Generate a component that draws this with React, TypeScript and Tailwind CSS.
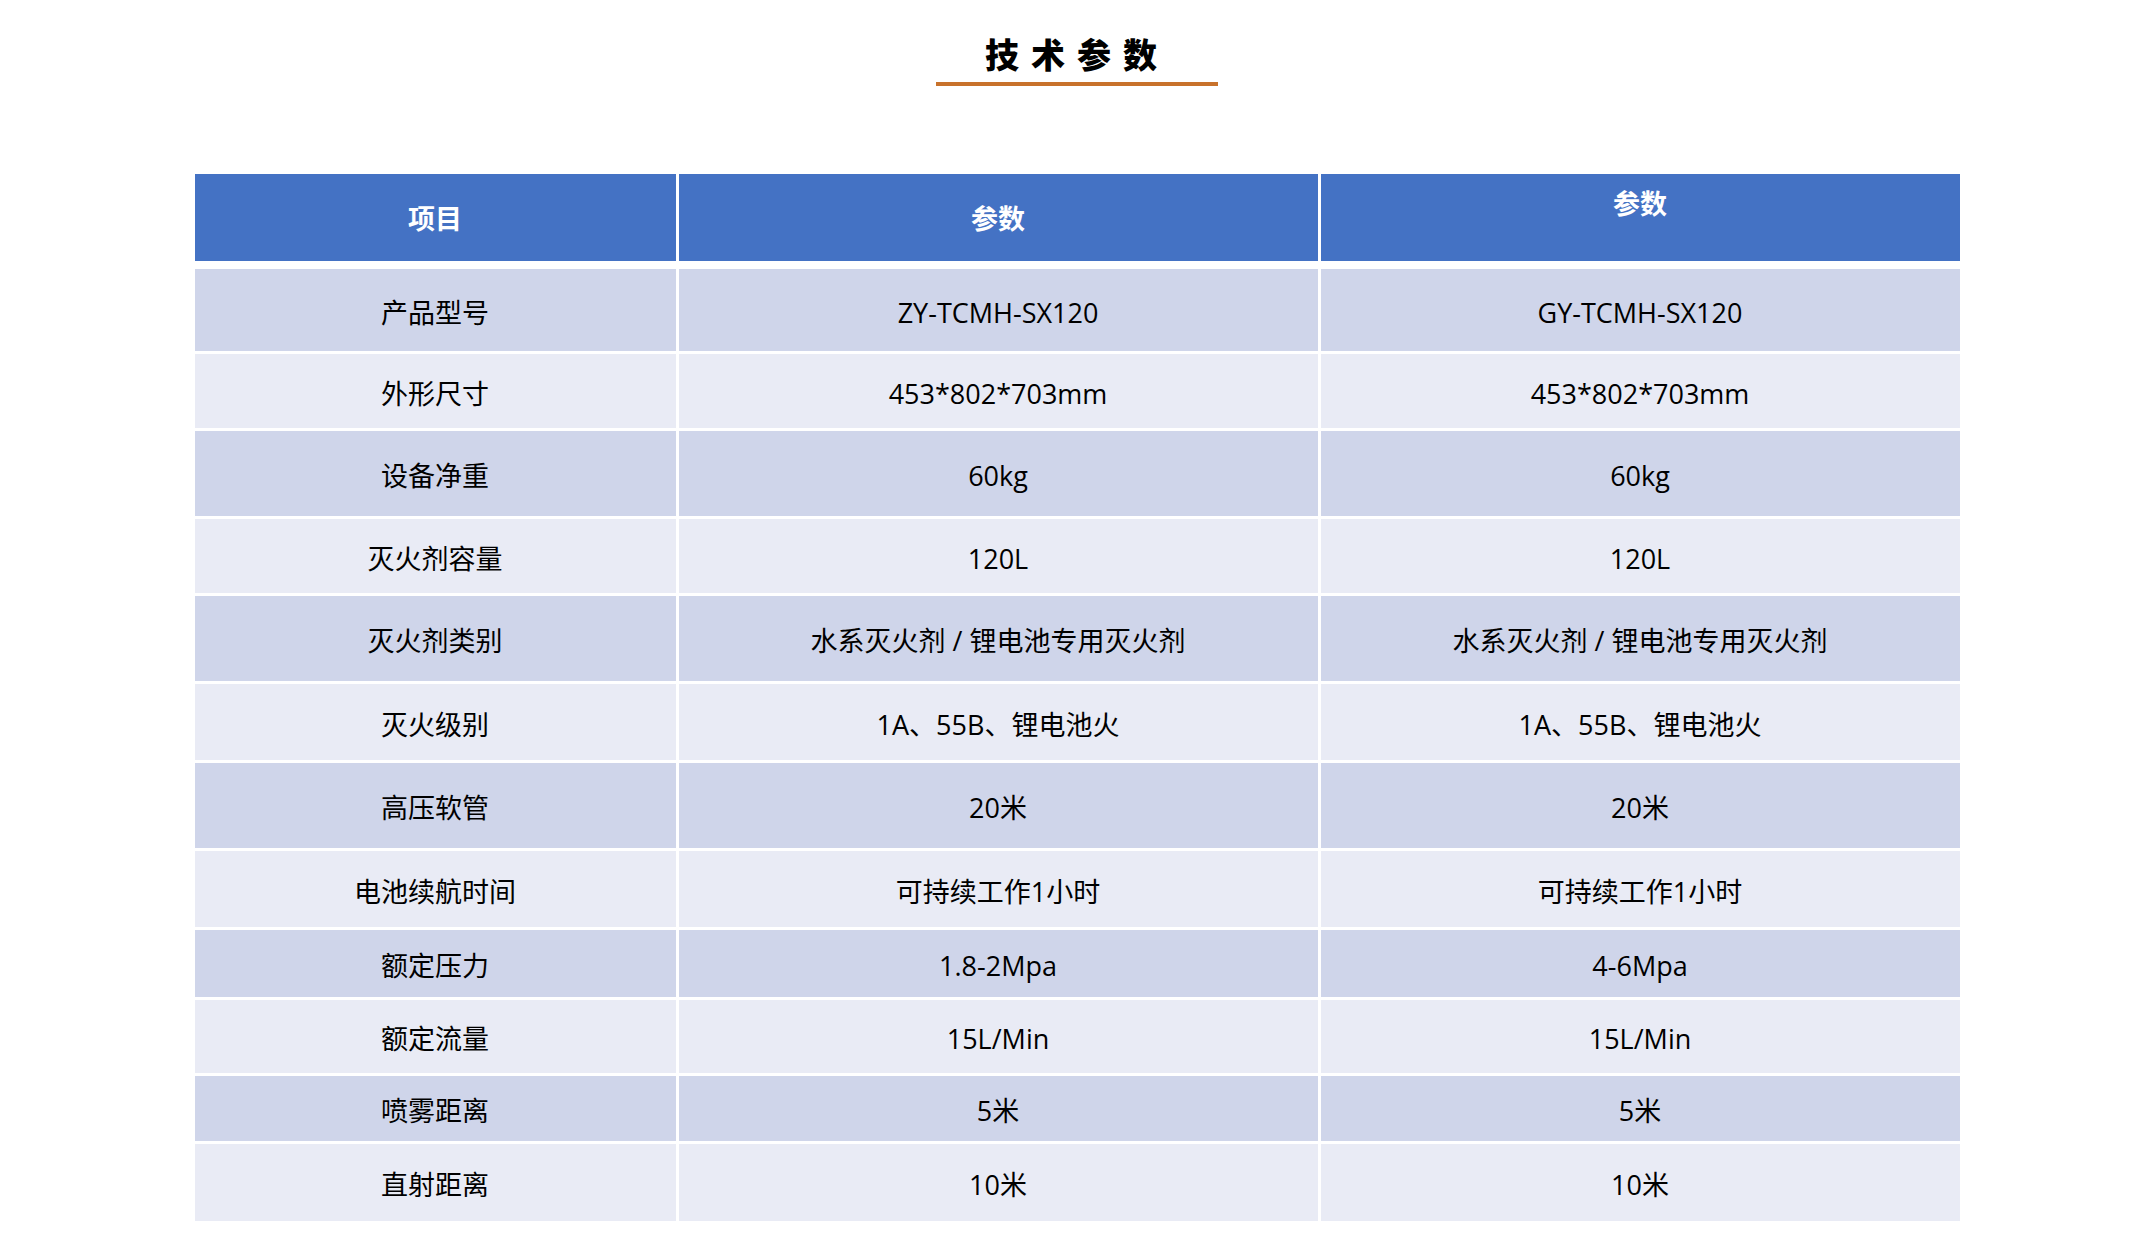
import React from "react";

type Row = { label: string; a: string; b: string; h: string; dark: boolean };

const rows: Row[] = [
  { label: "产品型号", a: "ZY-TCMH-SX120", b: "GY-TCMH-SX120", h: "h-[82px]", dark: true },
  { label: "外形尺寸", a: "453*802*703mm", b: "453*802*703mm", h: "h-[74px]", dark: false },
  { label: "设备净重", a: "60kg", b: "60kg", h: "h-[85px]", dark: true },
  { label: "灭火剂容量", a: "120L", b: "120L", h: "h-[74px]", dark: false },
  { label: "灭火剂类别", a: "水系灭火剂 / 锂电池专用灭火剂", b: "水系灭火剂 / 锂电池专用灭火剂", h: "h-[85px]", dark: true },
  { label: "灭火级别", a: "1A、55B、锂电池火", b: "1A、55B、锂电池火", h: "h-[76px]", dark: false },
  { label: "高压软管", a: "20米", b: "20米", h: "h-[85px]", dark: true },
  { label: "电池续航时间", a: "可持续工作1小时", b: "可持续工作1小时", h: "h-[76px]", dark: false },
  { label: "额定压力", a: "1.8-2Mpa", b: "4-6Mpa", h: "h-[67px]", dark: true },
  { label: "额定流量", a: "15L/Min", b: "15L/Min", h: "h-[73px]", dark: false },
  { label: "喷雾距离", a: "5米", b: "5米", h: "h-[65px]", dark: true },
  { label: "直射距离", a: "10米", b: "10米", h: "h-[77px]", dark: false },
];

export default function App() {
  return (
    <div
      className="w-[2154px] min-h-[1260px] bg-white text-black"
      style={{ fontFamily: '"Open Sans", "Noto Sans CJK SC", sans-serif' }}
    >
      <div className="flex flex-col items-center pt-[34px]">
        <h1
          className="text-[34px] leading-[40px] font-black tracking-[12px] text-black"
          style={{ fontFamily: '"Noto Sans CJK SC", sans-serif' }}
        >
          技术参数
        </h1>
        <div className="mt-[8px] h-[4px] w-[282px] bg-[#c8722b]" />
      </div>

      <div className="mx-auto mt-[88px] w-[1765px]">
        <div className="grid h-[87px] grid-cols-[481px_639px_639px] gap-x-[3px] text-[27px] font-bold text-white">
          <div className="flex items-center justify-center bg-[#4472c4] pt-[4px]">项目</div>
          <div className="flex items-center justify-center bg-[#4472c4] pt-[4px]">参数</div>
          <div className="flex items-start justify-center bg-[#4472c4] pt-[12px] leading-[36px]">参数</div>
        </div>

        <div className="mt-[8px] flex flex-col gap-y-[3px] text-[27px]">
          {rows.map((r, i) => (
            <div key={i} className={`grid grid-cols-[481px_639px_639px] gap-x-[3px] ${r.h}`}>
              <div className={`flex items-center justify-center pt-[6px] ${r.dark ? "bg-[#cfd5ea]" : "bg-[#e9ebf5]"}`}>
                {r.label}
              </div>
              <div className={`flex items-center justify-center pt-[6px] ${r.dark ? "bg-[#cfd5ea]" : "bg-[#e9ebf5]"}`}>
                {r.a}
              </div>
              <div className={`flex items-center justify-center pt-[6px] ${r.dark ? "bg-[#cfd5ea]" : "bg-[#e9ebf5]"}`}>
                {r.b}
              </div>
            </div>
          ))}
        </div>
      </div>
    </div>
  );
}
